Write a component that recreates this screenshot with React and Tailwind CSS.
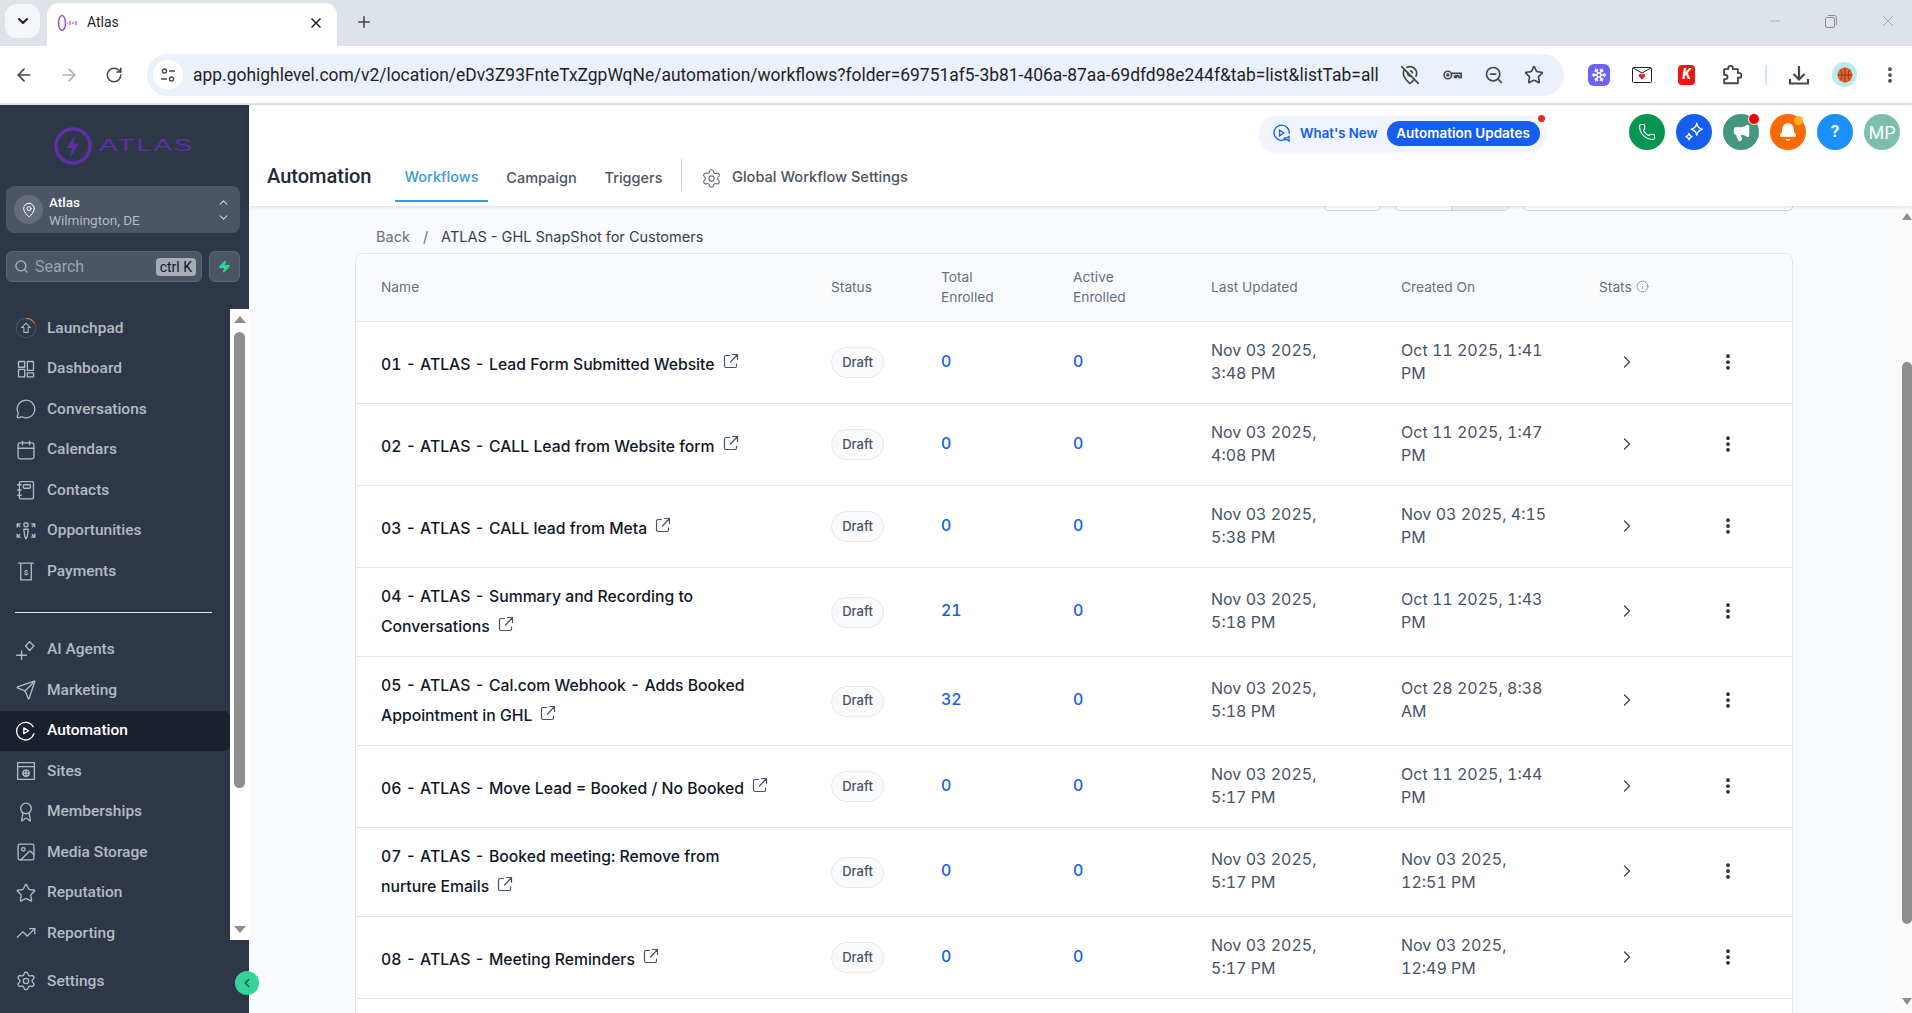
import React from 'react';
import {
  ArrowLeft, ArrowRight, RotateCw, X, Plus, ChevronDown, ChevronUp, ChevronRight, ChevronLeft, Minus,
  Search, MessageCircle, Calendar, Send, Award, Image, Star, TrendingUp, Settings, Phone, Bell,
  EllipsisVertical, MapPinOff, ZoomOut, Snowflake, Megaphone, MapPin, Info, Zap,
} from 'lucide-react';

const Ico = ({ children, className = 'w-6 h-6' }) => (
  <svg viewBox="0 0 24 24" fill="none" stroke="currentColor" strokeWidth="1.5" strokeLinecap="round" strokeLinejoin="round" className={className}>
    {children}
  </svg>
);

const LaunchpadIcon = () => (
  <svg viewBox="0 0 24 24" fill="none" className="w-6 h-6">
    <circle cx="12" cy="12" r="11" stroke="#4b5563" strokeWidth="1.2" />
    <path d="M12 1a11 11 0 0 1 9.5 5.5" stroke="#c2703d" strokeWidth="1.4" />
    <path d="M12 6.5 17 11.5h-2.6V17H9.6v-5.5H7z" stroke="#b5bac4" strokeWidth="1.2" strokeLinejoin="round" />
  </svg>
);
const DashboardIcon = () => (
  <Ico>
    <rect x="3.5" y="3.5" width="7" height="6.5" />
    <rect x="13.5" y="3.5" width="7" height="10" />
    <rect x="3.5" y="12.5" width="7" height="8.5" />
    <rect x="13.5" y="16.5" width="7" height="4.5" />
  </Ico>
);
const ContactsIcon = () => (
  <Ico>
    <rect x="4.5" y="2.5" width="16" height="19.5" rx="1.5" />
    <rect x="9" y="6" width="8" height="4" rx="1" />
    <path d="M2.5 6h4M2.5 12h4M2.5 18h4" />
  </Ico>
);
const OpportunitiesIcon = () => (
  <Ico>
    <circle cx="12" cy="5" r="2.4" />
    <path d="M9.5 10h5l-1 8-1.5 3-1.5-3z" />
    <path d="M2 4h3.5M2 4v3.5M2 4l3 3M22 4h-3.5M22 4v3.5M22 4l-3 3M2 19h3.5M2 19v-3.5M2 19l3-3M22 19h-3.5M22 19v-3.5M22 19l-3-3" />
  </Ico>
);
const PaymentsIcon = () => (
  <svg viewBox="0 0 24 24" fill="none" stroke="currentColor" strokeWidth="1.5" className="w-6 h-6">
    <path d="M3 3h18" />
    <path d="M6 3v19h12V3" />
    <text x="12" y="16" textAnchor="middle" fontSize="9" fontWeight="700" fill="currentColor" stroke="none" fontFamily="Roboto, sans-serif">$</text>
  </svg>
);
const AgentsIcon = () => (
  <Ico>
    <path d="M16 2.5 21 7.5 16 12.5 11.5 7.5z" />
    <path d="M7 13v10M1.500 18h11" />
  </Ico>
);
const AutomationIcon = () => (
  <Ico>
    <path d="M20 7a10 10 0 1 0 1 8" />
    <path d="M9.500 8.500v6.500l5.500-3.250z" />
  </Ico>
);
const SitesIcon = () => (
  <Ico>
    <rect x="2.500" y="2.500" width="19" height="19" />
    <path d="M2.500 7h19" />
    <circle cx="12" cy="14.500" r="3.500" />
    <path d="M8.500 14.500h7M12 11v7" />
  </Ico>
);
const ExternalIcon = () => (
  <svg viewBox="0 0 16 16" fill="none" stroke="#475467" strokeWidth="1.2" strokeLinecap="round" strokeLinejoin="round" className="inline-block w-4 h-4 ml-2 -translate-y-[4px]">
    <path d="M6.500 2.500H3a1.500 1.500 0 0 0-1.500 1.500v9A1.500 1.500 0 0 0 3 14.500h9a1.500 1.500 0 0 0 1.500-1.500V11" />
    <path d="M7.500 9 14.500 1.500M9.500 1.500h5v5" />
  </svg>
);

const navTop = [
  ['Launchpad', <LaunchpadIcon />],
  ['Dashboard', <DashboardIcon />],
  ['Conversations', <MessageCircle className="w-6 h-6" strokeWidth={1.5} />],
  ['Calendars', <Calendar className="w-6 h-6" strokeWidth={1.5} />],
  ['Contacts', <ContactsIcon />],
  ['Opportunities', <OpportunitiesIcon />],
  ['Payments', <PaymentsIcon />],
];
const navBottom = [
  ['AI Agents', <AgentsIcon />],
  ['Marketing', <Send className="w-6 h-6" strokeWidth={1.5} />],
  ['Automation', <AutomationIcon />, true],
  ['Sites', <SitesIcon />],
  ['Memberships', <Award className="w-6 h-6" strokeWidth={1.5} />],
  ['Media Storage', <Image className="w-6 h-6" strokeWidth={1.5} />],
  ['Reputation', <Star className="w-6 h-6" strokeWidth={1.5} />],
  ['Reporting', <TrendingUp className="w-6 h-6" strokeWidth={1.5} />],
];

const rows = [
  { name: ['01 - ATLAS - Lead Form Submitted Website'], total: 0, updated: ['Nov 03 2025,', '3:48 PM'], created: ['Oct 11 2025, 1:41', 'PM'] },
  { name: ['02 - ATLAS - CALL Lead from Website form'], total: 0, updated: ['Nov 03 2025,', '4:08 PM'], created: ['Oct 11 2025, 1:47', 'PM'] },
  { name: ['03 - ATLAS - CALL lead from Meta'], total: 0, updated: ['Nov 03 2025,', '5:38 PM'], created: ['Nov 03 2025, 4:15', 'PM'] },
  { name: ['04 - ATLAS - Summary and Recording to', 'Conversations'], total: 21, updated: ['Nov 03 2025,', '5:18 PM'], created: ['Oct 11 2025, 1:43', 'PM'] },
  { name: ['05 - ATLAS - Cal.com Webhook - Adds Booked', 'Appointment in GHL'], total: 32, updated: ['Nov 03 2025,', '5:18 PM'], created: ['Oct 28 2025, 8:38', 'AM'] },
  { name: ['06 - ATLAS - Move Lead = Booked / No Booked'], total: 0, updated: ['Nov 03 2025,', '5:17 PM'], created: ['Oct 11 2025, 1:44', 'PM'] },
  { name: ['07 - ATLAS - Booked meeting: Remove from', 'nurture Emails'], total: 0, updated: ['Nov 03 2025,', '5:17 PM'], created: ['Nov 03 2025,', '12:51 PM'] },
  { name: ['08 - ATLAS - Meeting Reminders'], total: 0, updated: ['Nov 03 2025,', '5:17 PM'], created: ['Nov 03 2025,', '12:49 PM'] },
];

const gridCols = 'grid grid-cols-[450px_110px_132px_138px_190px_198px_119px_1fr] pl-[25px] items-center';

const NavItem = ({ label, icon, active }) => (
  <div className={`h-[40.500px] w-[230px] shrink-0 flex items-center rounded-r-md text-[15.500px] font-medium ${active ? 'bg-[#1a202c] text-white' : 'text-[#b5bac4]'}`}>
    <div className={`w-[47px] flex justify-center pl-1 ${active ? 'text-white' : 'text-[#b5bac4]'}`}>
      <div className="scale-[0.88]">{icon}</div>
    </div>
    <span>{label}</span>
  </div>
);

const Sidebar = () => (
  <div className="relative w-[249px] shrink-0 bg-[#2e3748] flex flex-col font-['Roboto',sans-serif]">
    <div className="h-[81px] flex items-center pl-[54px] gap-[7px] shrink-0">
      <svg viewBox="0 0 38 38" fill="none" className="w-[38px] h-[38px] shrink-0">
        <circle cx="19" cy="19" r="17" stroke="#5e30a6" strokeWidth="3.500" />
        <path d="M21 8 12.500 21H18l-1.500 9L25 16.500h-5.500z" fill="#5e30a6" />
      </svg>
      <span className="origin-left scale-x-[1.7] text-[16.500px] tracking-[1px] text-[#5e30a6] font-['Liberation_Sans',sans-serif]">ATLAS</span>
    </div>
    <div className="ml-1.5 mr-[9px] h-[47px] shrink-0 rounded-lg bg-[#4b5563] flex items-center px-2">
      <div className="w-[29px] h-[29px] rounded-full bg-[#646c79] flex items-center justify-center text-white">
        <MapPin className="w-4 h-4" strokeWidth={1.5} />
      </div>
      <div className="ml-[6px] pt-0.5 flex-1 text-[13.500px] leading-[18px]">
        <div className="text-white font-medium">Atlas</div>
        <div className="text-[#b5bac4]">Wilmington, DE</div>
      </div>
      <div className="flex flex-col text-[#d1d5db] mr-0.5">
        <ChevronUp className="w-[13px] h-[13px]" />
        <ChevronDown className="w-[13px] h-[13px] mt-0.5" />
      </div>
    </div>
    <div className="ml-1.5 mr-[9px] mt-[18px] h-[31px] shrink-0 flex gap-[7px]">
      <div className="flex-1 rounded-md bg-[#4b5563] border border-[#5d6675] flex items-center px-[7px]">
        <Search className="w-[15px] h-[15px] text-[#b5bac4]" />
        <span className="ml-[6px] flex-1 text-[16px] text-[#9ca3af]">Search</span>
        <span className="bg-[#a6abb5] rounded-sm px-1 h-[18px] leading-[18px] text-[14px] text-[#111827] -mr-[2px]">ctrl K</span>
      </div>
      <div className="w-[31px] rounded-md bg-[#4b5563] border border-[#5d6675] flex items-center justify-center">
        <Zap className="w-[13px] h-[13px] text-[#34d399] fill-[#34d399]" />
      </div>
    </div>
    <div className="mt-[27px] h-[631px] shrink-0 flex">
      <div className="w-[230px]">
        <div className="flex flex-col -mt-px">
          {navTop.map(([label, icon]) => <NavItem key={label} label={label} icon={icon} />)}
          <div className="h-px w-[197px] ml-[15px] bg-[#e5e7eb] mt-5 mb-[17px] shrink-0" />
          {navBottom.map(([label, icon, active]) => <NavItem key={label} label={label} icon={icon} active={active} />)}
        </div>
      </div>
      <div className="w-[19px] bg-white flex flex-col items-center relative">
        <div className="w-0 h-0 mt-[7px] border-x-[6px] border-x-transparent border-b-[7px] border-b-[#8e8e8e]" />
        <div className="w-[11px] h-[456px] mt-[9px] rounded-full bg-[#8e8e8e]" />
        <div className="w-0 h-0 mt-[138px] border-x-[6px] border-x-transparent border-t-[7px] border-t-[#8e8e8e]" />
      </div>
    </div>
    <div className="mt-[21px]">
      <NavItem label="Settings" icon={<Settings className="w-6 h-6" strokeWidth={1.5} />} />
    </div>
    <div className="absolute left-[235px] top-[866px] w-6 h-6 rounded-full bg-[#34d399] flex items-center justify-center z-20">
      <ChevronLeft className="w-[14px] h-[14px] text-[#1f4b4a]" strokeWidth={2.500} />
    </div>
  </div>
);

const HeaderCircle = ({ bg, children, dot }) => (
  <div className={`relative w-9 h-9 rounded-full flex items-center justify-center text-white ${bg}`}>
    {children}
    {dot}
  </div>
);

const Header = () => (
  <div className="relative z-10 h-[101px] shrink-0 bg-white shadow-[0_1px_4px_rgba(0,0,0,0.12)] font-['Inter',sans-serif]">
    <div className="h-[46px] pt-[10px] flex justify-end pr-[12px]">
      <div className="relative h-[35px] w-[287px] mt-px rounded-full bg-[#eff4fe] shadow-[0_1px_3px_rgba(0,0,0,0.06)] flex items-center pl-[13px] mr-[84px]">
        <svg viewBox="0 0 20 20" fill="none" stroke="#155eef" strokeWidth="1.300" className="w-[19px] h-[19px] shrink-0">
          <path d="M15 15.500a8 8 0 1 1 3-5" />
          <path d="M8 6.500v6l4.500-3z" />
          <path d="M13 14.500h3l2-1.500v5l-2-1.500h-3z" />
        </svg>
        <span className="ml-[9px] text-[13.250px] font-semibold text-[#155eef]">What's New</span>
        <span className="ml-[9px] h-[25px] w-[153px] rounded-full bg-[#155eef] text-white text-[13.500px] font-semibold flex items-center justify-center">Automation Updates</span>
        <span className="absolute right-[1px] -top-[1px] w-[7px] h-[7px] rounded-full bg-[#e02d20]" />
      </div>
      <div className="flex gap-[11px] -mt-[1px] -ml-[1px]">
        <HeaderCircle bg="bg-[#059652]"><Phone className="w-[18px] h-[18px]" strokeWidth={1.500} /></HeaderCircle>
        <HeaderCircle bg="bg-[#155eef]">
          <svg viewBox="0 0 24 24" fill="none" stroke="white" strokeWidth="1.500" strokeLinejoin="round" className="w-[22px] h-[22px]">
            <path d="M15 2.500c.7 4 2 5.400 6 6.500-4 1-5.300 2.500-6 6.500-.7-4-2-5.500-6-6.500 4-1.100 5.300-2.500 6-6.500z" />
            <path d="M6.500 13.500c.4 2.200 1.100 3 3.300 3.500-2.200.6-2.900 1.300-3.300 3.500-.4-2.200-1.100-2.900-3.300-3.500 2.200-.5 2.900-1.300 3.300-3.500z" />
          </svg>
        </HeaderCircle>
        <HeaderCircle bg="bg-[#45967e]" dot={<span className="absolute -right-[1px] -top-[1px] w-3 h-3 rounded-full bg-[#f00000] border border-white" />}>
          <Megaphone className="w-[19px] h-[19px] fill-white" strokeWidth={1.500} />
        </HeaderCircle>
        <HeaderCircle bg="bg-[#fb6a00]" dot={<span className="absolute right-[3px] top-[2px] w-[9px] h-[9px] rounded-full bg-[#fdb022]" />}>
          <Bell className="w-5 h-5 fill-white" strokeWidth={1.500} />
        </HeaderCircle>
        <HeaderCircle bg="bg-[#1c8ffb]"><span className="text-[17px] font-bold font-['Roboto',sans-serif]">?</span></HeaderCircle>
        <HeaderCircle bg="bg-[#7dbfac]"><span className="text-[18px] font-['Roboto',sans-serif]">MP</span></HeaderCircle>
      </div>
    </div>
    <div className="h-[55px] flex items-stretch pl-[18px] relative">
      <div className="w-[128px] pt-[9px] text-[20px] leading-[32px] font-medium text-[#1f2937] font-['Roboto',sans-serif]">Automation</div>
      <div className="w-[93px] h-[51px] border-b-[2px] border-[#3b9ad9] text-[#3b9ad9] text-[14.500px] font-medium flex items-center justify-center pt-[2px]">Workflows</div>
      <div className="ml-[18px] w-[71px] h-[51px] text-[#4b5563] text-[14.500px] font-medium flex items-center justify-center pt-[3px]">Campaign</div>
      <div className="ml-[27px] w-[59px] h-[51px] text-[#4b5563] text-[14.500px] font-medium flex items-center justify-center pt-[3px]">Triggers</div>
      <div className="ml-[18px] mt-[7px] w-px h-[33px] bg-[#d1d5db]" />
      <div className="ml-[19px] h-[51px] flex items-center pt-[3px] text-[#4b5563] text-[14.600px] font-medium">
        <Settings className="w-[21px] h-[21px] text-[#667085]" strokeWidth={1.300} />
        <span className="ml-[10px]">Global Workflow Settings</span>
      </div>
    </div>
  </div>
);

const Table = () => (
  <div className="w-[1438px] rounded-t-lg border border-[#e5e7eb] bg-white font-['Inter',sans-serif]">
    <div className={`${gridCols} h-[68px] pb-[2px] rounded-t-lg bg-[#f9fafb] border-b border-[#e5e7eb] text-[13.750px] leading-[20px] text-[#667085]`}>
      <div>Name</div>
      <div>Status</div>
      <div>Total<br />Enrolled</div>
      <div>Active<br />Enrolled</div>
      <div>Last Updated</div>
      <div>Created On</div>
      <div className="flex items-center gap-1">Stats <Info className="w-[13px] h-[13px]" strokeWidth={1.300} /></div>
      <div />
    </div>
    {rows.map((r) => (
      <div key={r.name[0]} className={`${gridCols} min-h-[82px] py-[14px] border-b border-[#e5e7eb] tabular-nums`}>
        <div className={`text-[15.750px] font-medium leading-[30px] text-[#101828] ${r.name.length === 1 ? 'pt-1' : ''}`}>
          {r.name.length === 2 ? <>{r.name[0]}<br /></> : null}
          {r.name[r.name.length - 1]}
          <ExternalIcon />
        </div>
        <div>
          <span className="inline-flex items-center justify-center w-[53px] h-[31px] rounded-full bg-[#f9fafb] border border-[#e5e7eb] text-[13px] font-medium text-[#475467]">Draft</span>
        </div>
        <div className="pb-1 text-[16px] font-medium text-[#155eef]">{r.total}</div>
        <div className="pb-1 text-[16px] font-medium text-[#155eef]">0</div>
        <div className="pb-0.5 text-[16px] leading-[23px] text-[#475467]">{r.updated[0]}<br />{r.updated[1]}</div>
        <div className="pb-0.5 text-[16px] leading-[23px] text-[#475467] whitespace-nowrap">{r.created[0]}<br />{r.created[1]}</div>
        <div className="pb-0.5"><ChevronRight className="w-5 h-5 ml-[18px] text-[#344054]" strokeWidth={1.500} /></div>
        <div className="pb-0.5"><EllipsisVertical className="w-5 h-5 text-[#1d2939]" strokeWidth={2.500} /></div>
      </div>
    ))}
    <div className="h-[40px]" />
  </div>
);

const Content = () => (
  <div className="flex-1 flex flex-col min-w-0 bg-[#f9fafb]">
    <Header />
    <div className="flex-1 flex min-h-0">
      <div className="flex-1 pl-[106px] font-['Inter',sans-serif] overflow-hidden">
        <div className="h-[5px] flex justify-end gap-[14px] w-[1438px]">
          <div className="w-[57px] rounded-b-md border border-t-0 border-[#d0d5dd] bg-white" />
          <div className="w-[114px] rounded-b-md border border-t-0 border-[#d0d5dd] bg-white flex">
            <div className="w-[56px] border-r border-[#d0d5dd]" />
            <div className="flex-1 bg-[#f2f4f7] rounded-br-md" />
          </div>
          <div className="w-[270px] rounded-b-md border border-t-0 border-[#d0d5dd] bg-white" />
        </div>
        <div className="h-[42px] flex items-center text-[14.500px] pt-[10px] pl-[21px]">
          <span className="text-[#667085]">Back</span>
          <span className="ml-[13px] text-[#667085]">/</span>
          <span className="ml-[13px] text-[#344054]">ATLAS - GHL SnapShot for Customers</span>
        </div>
        <Table />
      </div>
      <div className="w-[10px] shrink-0 bg-[#fbfbfc] flex flex-col items-center">
        <div className="w-0 h-0 mt-[7px] border-x-[5px] border-x-transparent border-b-[7px] border-b-[#8e8e8e]" />
        <div className="w-[10px] h-[562px] mt-[142px] rounded-b-full rounded-t-full bg-[#8e8e8e]" />
        <div className="w-0 h-0 mt-[74px] border-x-[5px] border-x-transparent border-t-[7px] border-t-[#8e8e8e]" />
      </div>
    </div>
  </div>
);

const ChromeBar = () => (
  <div className="shrink-0 font-['Roboto',sans-serif]">
    <div className="h-[46px] bg-[#dee3ea] flex items-end relative">
      <div className="absolute left-[5px] top-[4px] w-[35px] h-[34px] rounded-xl bg-[#f4f6f9] flex items-center justify-center">
        <ChevronDown className="w-4 h-4 text-[#1f1f1f]" strokeWidth={3} />
      </div>
      <div className="ml-[47px] w-[290px] h-[43px] pb-1 rounded-t-xl bg-white flex items-center pl-[10px] text-[#1f1f1f] text-[14px]">
        <svg viewBox="0 0 22 18" fill="none" className="w-[22px] h-[18px] shrink-0">
          <ellipse cx="5" cy="9" rx="3.500" ry="7.500" stroke="#8b5cc7" strokeWidth="1.500" />
          <path d="M10 9h1M13 7v4M16 8v2M19 7v4" stroke="#8b5cc7" strokeWidth="1.200" />
        </svg>
        <span className="ml-[8px] flex-1">Atlas</span>
        <X className="w-4 h-4 mr-[13px] text-[#1f1f1f]" strokeWidth={2.500} />
      </div>
      <Plus className="ml-[18px] mb-[15px] w-[18px] h-[18px] text-[#3c4043]" strokeWidth={2} />
      <div className="ml-auto flex items-center gap-[40px] pr-[15px] mb-[16px] text-[#8a8d91]">
        <Minus className="w-4 h-4" strokeWidth={1} />
        <svg viewBox="0 0 16 16" fill="none" stroke="currentColor" className="w-4 h-4">
          <rect x="2.500" y="4.500" width="9" height="10" rx="1.500" />
          <path d="M5 2.500h6.500a2 2 0 0 1 2 2V12" />
        </svg>
        <X className="w-[18px] h-[18px]" strokeWidth={1} />
      </div>
    </div>
    <div className="h-[59px] bg-white border-b-2 border-[#e2e2e2] flex items-center pl-[14px]">
      <ArrowLeft className="w-5 h-5 text-[#474747]" strokeWidth={2} />
      <ArrowRight className="ml-[25px] w-5 h-5 text-[#b0b0b0]" strokeWidth={2} />
      <RotateCw className="ml-[26px] w-[18px] h-[18px] text-[#474747]" strokeWidth={2} />
      <div className="ml-[24px] w-[1417px] h-[42px] rounded-full bg-[#ebf1fa] flex items-center pl-[6px] pr-[20px]">
        <div className="w-[30px] h-[30px] rounded-full bg-white flex items-center justify-center text-[#474747]">
          <svg viewBox="0 0 16 16" fill="none" stroke="currentColor" strokeWidth="1.400" className="w-4 h-4">
            <circle cx="4.500" cy="4" r="2" /><path d="M9 4h6M1 12h6" /><circle cx="11.500" cy="12" r="2" />
          </svg>
        </div>
        <span className="ml-[10px] mt-0.5 flex-1 text-[17.450px] text-[#1f1f1f] whitespace-nowrap">app.gohighlevel.com/v2/location/eDv3Z93FnteTxZgpWqNe/automation/workflows?folder=69751af5-3b81-406a-87aa-69dfd98e244f&amp;tab=list&amp;listTab=all</span>
        <div className="flex items-center gap-[20px] text-[#474747]">
          <MapPinOff className="w-5 h-5" strokeWidth={2} />
          <svg viewBox="0 0 24 24" fill="none" stroke="currentColor" strokeWidth="2" className="w-[24px] h-[20px]">
            <circle cx="7" cy="12" r="4.500" /><circle cx="7" cy="12" r="1" fill="currentColor" /><path d="M11.500 10H23v5h-3v-2h-3v2h-2v-2.500" />
          </svg>
          <ZoomOut className="w-5 h-5" strokeWidth={2} />
          <Star className="w-5 h-5" strokeWidth={2} />
        </div>
      </div>
      <div className="ml-[24px] w-[22px] h-[22px] rounded-md bg-[#6c63f5] flex items-center justify-center">
        <Snowflake className="w-4 h-4 text-white" strokeWidth={2} />
      </div>
      <svg viewBox="0 0 20 16" className="ml-[22px] w-[20px] h-[16px]">
        <rect x="0.500" y="0.500" width="19" height="15" rx="1" fill="white" stroke="#222" />
        <path d="M1 1l9 5 9-5" fill="none" stroke="#222" />
        <path d="M10 12.500 6.800 9.300a1.800 1.800 0 0 1 3.200-1.600 1.800 1.800 0 0 1 3.200 1.600z" fill="#e0203c" />
      </svg>
      <div className="ml-[26px] w-[17px] h-[20px] rounded bg-[#f01414] flex items-center justify-center text-white text-[14px] font-bold italic">K</div>
      <svg viewBox="0 0 24 24" fill="none" stroke="#474747" strokeWidth="2" strokeLinejoin="round" className="ml-[25px] w-[22px] h-[22px]">
        <path d="M9 5.500V4.500a2.500 2.500 0 0 1 5 0v1h5.500V10H21a2.500 2.500 0 0 1 0 5h-1.500v6H4.500v-4.500H6a2.200 2.200 0 0 0 0-4.500H4.500V5.500z" />
      </svg>
      <div className="ml-[23px] w-[2px] h-[20px] bg-[#d3e3fd]" />
      <svg viewBox="0 0 24 24" fill="none" stroke="#474747" strokeWidth="2.200" className="ml-[20px] w-[24px] h-[24px]">
        <path d="M12 3v13M6.500 11 12 16.500 17.500 11M3 16v4.500h18V16" />
      </svg>
      <div className="ml-[21px] w-[25px] h-[25px] rounded-full bg-[#b9ecf2] flex items-center justify-center">
        <svg viewBox="0 0 16 16" fill="none" className="w-4 h-4">
          <circle cx="8" cy="8" r="7.500" fill="#e8632a" />
          <path d="M.5 8h15M8 .5v15M3 2.500c2.500 3 2.500 8 0 11M13 2.500c-2.500 3-2.500 8 0 11" stroke="#5a2a14" strokeWidth="0.700" />
        </svg>
      </div>
      <EllipsisVertical className="ml-[23px] w-[20px] h-[20px] text-[#474747]" strokeWidth={2.500} />
    </div>
  </div>
);

export default function App() {
  return (
    <div className="w-[1912px] h-[1013px] overflow-hidden flex flex-col bg-white">
      <ChromeBar />
      <div className="flex-1 flex min-h-0">
        <Sidebar />
        <Content />
      </div>
    </div>
  );
}
